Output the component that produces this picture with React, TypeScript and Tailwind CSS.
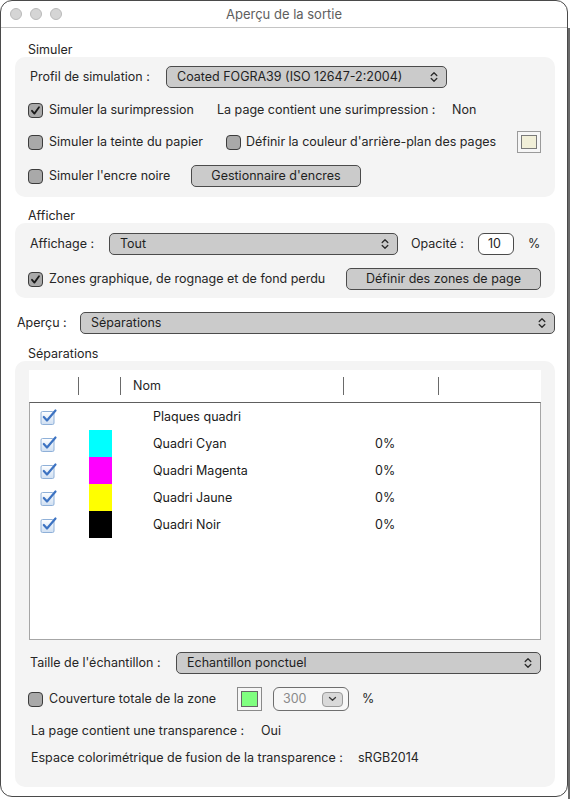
import React from "react";

function Cb({ checked }: { checked?: boolean }) {
  return (
    <div className="w-[15px] h-[15px] rounded-[4px] border border-[#3c3c3c] bg-[#a9a9a9] flex items-center justify-center shrink-0">
      {checked && (
        <svg width="11" height="11" viewBox="0 0 11 11">
          <path d="M2 5.8 L4.4 8.6 L9 2.2" fill="none" stroke="#1a1a1a" strokeWidth="1.8" strokeLinecap="round" strokeLinejoin="round" />
        </svg>
      )}
    </div>
  );
}

function UpDown() {
  return (
    <svg width="8" height="12" viewBox="0 0 8 12" className="shrink-0">
      <path d="M1.2 4.5 L4 1.7 L6.8 4.5" fill="none" stroke="#2a2a2a" strokeWidth="1.3" strokeLinecap="round" strokeLinejoin="round" />
      <path d="M1.2 7.5 L4 10.3 L6.8 7.5" fill="none" stroke="#2a2a2a" strokeWidth="1.3" strokeLinecap="round" strokeLinejoin="round" />
    </svg>
  );
}

function Sel({ text, className }: { text: string; className: string }) {
  return (
    <div className={"h-[22px] rounded-[5px] border border-[#4b4b4b] bg-[#cbcbcb] flex items-center justify-between pl-[10px] pr-[8px] shrink-0 " + className}>
      <span className="text-[#1f1f1f]">{text}</span>
      <UpDown />
    </div>
  );
}

function Btn({ text, className }: { text: string; className: string }) {
  return (
    <div className={"h-[22px] rounded-[5px] border border-[#4b4b4b] bg-[#cbcbcb] flex items-center justify-center shrink-0 text-[#1f1f1f] " + className}>
      {text}
    </div>
  );
}

function BlueCheck() {
  return (
    <svg width="18" height="17" viewBox="0 0 18 17">
      <defs>
        <linearGradient id="bg1" x1="0" y1="0" x2="0" y2="1">
          <stop offset="0" stopColor="#ffffff" />
          <stop offset="1" stopColor="#cfdff2" />
        </linearGradient>
      </defs>
      <rect x="1" y="3.5" width="13" height="13" rx="1.5" fill="url(#bg1)" stroke="#8fb0d8" strokeWidth="1" />
      <path d="M3.8 9 L7 12.5 L15.5 2.5" fill="none" stroke="#3d73c2" strokeWidth="2.2" strokeLinecap="round" strokeLinejoin="round" />
    </svg>
  );
}

const rows = [
  { name: "Plaques quadri", color: null as string | null, pct: "" },
  { name: "Quadri Cyan", color: "#00ffff", pct: "0%" },
  { name: "Quadri Magenta", color: "#ff00ff", pct: "0%" },
  { name: "Quadri Jaune", color: "#ffff00", pct: "0%" },
  { name: "Quadri Noir", color: "#000000", pct: "0%" },
];

export default function App() {
  return (
    <div className="w-[571px] h-[799px] bg-white flex font-['Inter','Noto_Sans',sans-serif] text-[12.5px] leading-[16px] text-[#262626]">
      <div className="w-[568px] h-[797px] rounded-[12px] border border-[#4a4a4a] bg-white overflow-hidden flex flex-col shrink-0">
        {/* Title bar */}
        <div className="h-[27px] border-b border-[#c4c4c4] flex items-center relative shrink-0">
          <div className="flex items-center gap-[8px] pl-[9px]">
            <div className="w-[12px] h-[12px] rounded-full bg-[#d5d5d5] border border-[#b9b9b9]" />
            <div className="w-[12px] h-[12px] rounded-full bg-[#d5d5d5] border border-[#b9b9b9]" />
            <div className="w-[12px] h-[12px] rounded-full bg-[#d5d5d5] border border-[#b9b9b9]" />
          </div>
          <div className="absolute inset-0 flex items-center justify-center text-[13px] text-[#5e5e5e]">Aperçu de la sortie</div>
        </div>

        <div className="flex flex-col pl-[14px] pr-[12px]">
          {/* Simuler */}
          <div className="h-[15px] mt-[14px] ml-[13px]">Simuler</div>
          <div className="rounded-[10px] bg-[#f4f4f4] pl-[13px] pt-[9px] pb-[10px] flex flex-col">
            <div className="h-[22px] flex items-center">
              <div className="w-[136px] ml-[2px] shrink-0">Profil de simulation :</div>
              <Sel text="Coated FOGRA39 (ISO 12647-2:2004)" className="w-[281px]" />
            </div>
            <div className="h-[22px] mt-[11px] flex items-center">
              <div className="w-[189px] flex items-center gap-[6px] shrink-0">
                <Cb checked />
                <span>Simuler la surimpression</span>
              </div>
              <div className="w-[235px] shrink-0">La page contient une surimpression :</div>
              <div>Non</div>
            </div>
            <div className="h-[22px] mt-[10px] flex items-center">
              <div className="w-[198px] flex items-center gap-[6px] shrink-0">
                <Cb />
                <span>Simuler la teinte du papier</span>
              </div>
              <div className="w-[291px] flex items-center gap-[5px] shrink-0">
                <Cb />
                <span>Définir la couleur d'arrière-plan des pages</span>
              </div>
              <div className="w-[24px] h-[22px] border border-[#9a9a9a] bg-[#f6f6f6] p-[3px] shrink-0">
                <div className="w-full h-full border border-[#7a7a7a] bg-[#f1efd8]" />
              </div>
            </div>
            <div className="h-[22px] mt-[12px] flex items-center">
              <div className="w-[163px] flex items-center gap-[6px] shrink-0">
                <Cb />
                <span>Simuler l'encre noire</span>
              </div>
              <Btn text="Gestionnaire d'encres" className="w-[170px]" />
            </div>
          </div>

          {/* Afficher */}
          <div className="h-[15px] mt-[11px] ml-[13px]">Afficher</div>
          <div className="rounded-[10px] bg-[#f4f4f4] pl-[13px] pt-[10px] pb-[8px] flex flex-col">
            <div className="h-[22px] flex items-center">
              <div className="w-[79px] ml-[2px] shrink-0">Affichage :</div>
              <Sel text="Tout" className="w-[289px]" />
              <div className="w-[67px] ml-[13px] shrink-0">Opacité :</div>
              <div className="w-[36px] h-[22px] rounded-[6px] border border-[#4b4b4b] bg-white flex items-center pl-[9px] shrink-0 text-[#1f1f1f]">10</div>
              <div className="ml-[14px]">%</div>
            </div>
            <div className="h-[22px] mt-[13px] flex items-center">
              <div className="w-[318px] flex items-center gap-[6px] shrink-0">
                <Cb checked />
                <span>Zones graphique, de rognage et de fond perdu</span>
              </div>
              <Btn text="Définir des zones de page" className="w-[195px]" />
            </div>
          </div>

          {/* Aperçu */}
          <div className="h-[22px] mt-[14px] flex items-center">
            <div className="w-[63px] ml-[2px] shrink-0">Aperçu :</div>
            <Sel text="Séparations" className="w-[475px]" />
          </div>

          {/* Séparations */}
          <div className="h-[15px] mt-[12px] ml-[13px]">Séparations</div>
          <div className="rounded-[10px] bg-[#f4f4f4] pl-[14px] pr-[14px] pt-[9px] h-[426px] flex flex-col">
            <div className="h-[32px] bg-white flex items-center shrink-0">
              <div className="w-[50px] h-[18px] border-r border-[#6a6a6a] shrink-0" />
              <div className="w-[42px] h-[18px] border-r border-[#6a6a6a] shrink-0" />
              <div className="w-[223px] h-[18px] border-r border-[#6a6a6a] shrink-0 pl-[12px] flex items-center">Nom</div>
              <div className="w-[95px] h-[18px] border-r border-[#6a6a6a] shrink-0" />
            </div>
            <div className="h-[238px] bg-white border border-[#a6a6a6] border-t-[#5e5e5e] flex flex-col shrink-0">
              {rows.map((r) => (
                <div key={r.name} className="h-[27px] flex items-center shrink-0">
                  <div className="w-[49px] flex justify-start shrink-0 pl-[10px]">
                    <BlueCheck />
                  </div>
                  <div className="w-[42px] h-[27px] flex justify-center shrink-0">
                    {r.color && <div className="w-[23px] h-[27px]" style={{ backgroundColor: r.color }} />}
                  </div>
                  <div className="w-[223px] pl-[32px] shrink-0 text-[#1a1a1a]">{r.name}</div>
                  <div className="pl-[31px] text-[#1a1a1a]">{r.pct}</div>
                </div>
              ))}
            </div>

            <div className="h-[22px] mt-[12px] flex items-center -ml-[1px]">
              <div className="w-[146px] ml-[2px] shrink-0">Taille de l'échantillon :</div>
              <Sel text="Echantillon ponctuel" className="w-[365px]" />
            </div>
            <div className="h-[24px] mt-[13px] flex items-center -ml-[1px]">
              <div className="w-[209px] flex items-center gap-[6px] shrink-0">
                <Cb />
                <span>Couverture totale de la zone</span>
              </div>
              <div className="w-[25px] h-[24px] border border-[#8a8a8a] bg-[#f6f6f6] p-[3px] shrink-0">
                <div className="w-full h-full border border-[#666] bg-[#80ff80]" />
              </div>
              <div className="w-[76px] h-[24px] ml-[11px] rounded-[6px] border border-[#6e6e6e] bg-[#f7f7f7] flex items-center justify-between pl-[9px] pr-[5px] shrink-0">
                <span className="text-[#8a8a8a]">300</span>
                <div className="w-[21px] h-[15px] rounded-[4px] border border-[#9a9a9a] bg-[#d9d9d9] flex items-center justify-center">
                  <svg width="9" height="6" viewBox="0 0 9 6">
                    <path d="M1.5 1.5 L4.5 4.3 L7.5 1.5" fill="none" stroke="#3a3a3a" strokeWidth="1.3" strokeLinecap="round" strokeLinejoin="round" />
                  </svg>
                </div>
              </div>
              <div className="ml-[13px]">%</div>
            </div>
            <div className="h-[16px] mt-[12px] flex items-center">
              <div className="w-[230px] ml-[2px] shrink-0">La page contient une transparence :</div>
              <div>Oui</div>
            </div>
            <div className="h-[16px] mt-[11px] flex items-center">
              <div className="w-[327px] ml-[2px] shrink-0">Espace colorimétrique de fusion de la transparence :</div>
              <div>sRGB2014</div>
            </div>
          </div>
        </div>
      </div>
      <div className="w-[3px] h-[799px] pt-[28px] shrink-0">
        <div className="w-[2px] h-full bg-[#6a6a6a]" />
      </div>
    </div>
  );
}
